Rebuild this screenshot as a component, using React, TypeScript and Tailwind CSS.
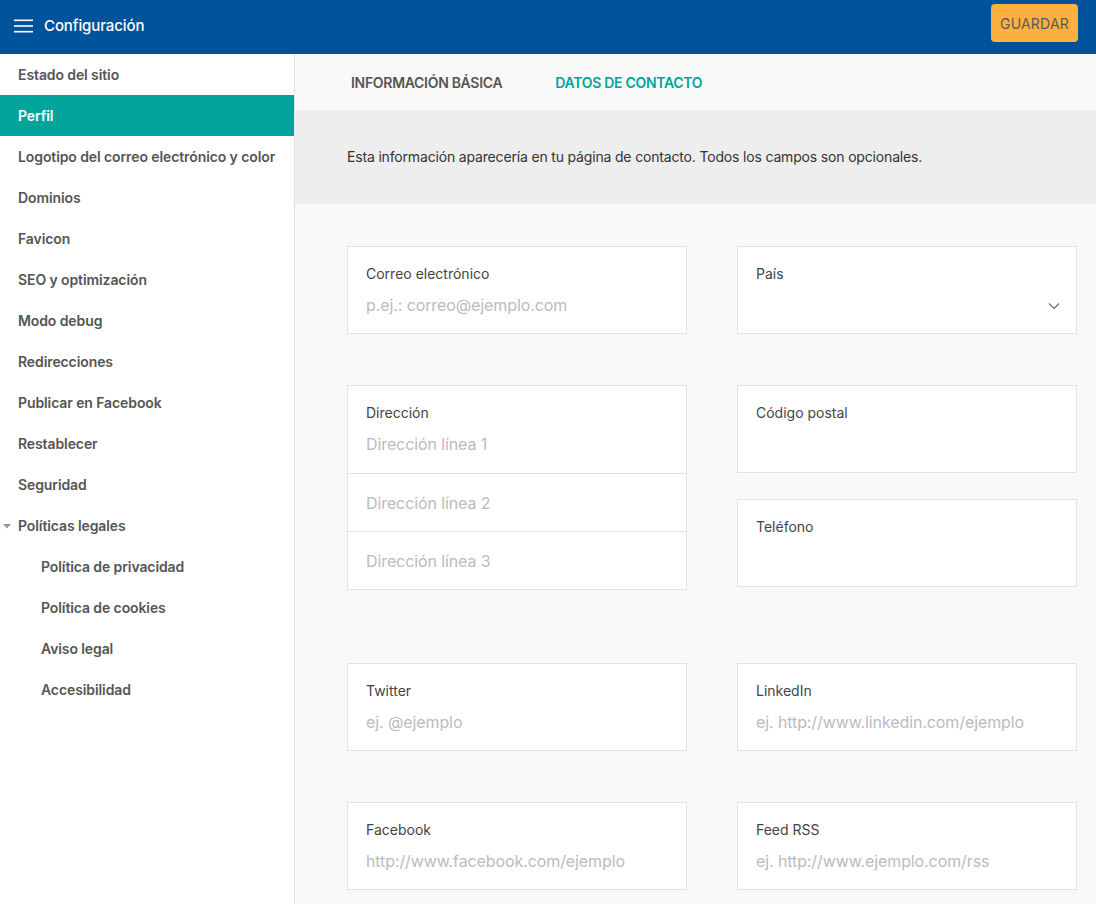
import React from "react";

const navItems: { label: string; active?: boolean; sub?: boolean; caret?: boolean }[] = [
  { label: "Estado del sitio" },
  { label: "Perfil", active: true },
  { label: "Logotipo del correo electrónico y color" },
  { label: "Dominios" },
  { label: "Favicon" },
  { label: "SEO y optimización" },
  { label: "Modo debug" },
  { label: "Redirecciones" },
  { label: "Publicar en Facebook" },
  { label: "Restablecer" },
  { label: "Seguridad" },
  { label: "Políticas legales", caret: true },
  { label: "Política de privacidad", sub: true },
  { label: "Política de cookies", sub: true },
  { label: "Aviso legal", sub: true },
  { label: "Accesibilidad", sub: true },
];

function Card({ label, placeholder, select }: { label: string; placeholder?: string; select?: boolean }) {
  return (
    <div className="w-[340px] h-[88px] bg-white border border-[#e3e3e3] px-[18px] pt-[18px]">
      <div className="text-[14px] leading-[18px] text-[#444]">{label}</div>
      <div className="mt-[12px] h-[20px] flex items-center justify-between text-[16px] leading-[20px] text-[#bbb] tracking-[-0.1px]">
        <span>{placeholder ?? ""}</span>
        {select && (
          <svg width="12" height="8" viewBox="0 0 12 8" className="mr-[-2px] mt-[2px]">
            <path d="M1 1.5 L6 6.5 L11 1.5" fill="none" stroke="#666" strokeWidth="1.1" />
          </svg>
        )}
      </div>
    </div>
  );
}

export default function App() {
  return (
    <div className="w-[1096px] h-[904px] overflow-hidden flex flex-col bg-[#f9f9f9]" style={{ fontFamily: "Inter, 'Noto Sans', sans-serif" }}>
      <header className="h-[54px] shrink-0 bg-[#00529b] flex items-start justify-between pl-[14px] pr-[18px]">
        <div className="flex items-center gap-[11px] h-[52px]">
          <svg width="19" height="14" viewBox="0 0 19 14">
            <rect x="0" y="0.5" width="19" height="1.6" fill="#fff" />
            <rect x="0" y="6.2" width="19" height="1.6" fill="#fff" />
            <rect x="0" y="11.9" width="19" height="1.6" fill="#fff" />
          </svg>
          <span className="text-white text-[15px] font-medium tracking-[-0.1px]">Configuración</span>
        </div>
        <button className="mt-[4px] h-[38px] w-[87px] rounded-[4px] bg-[#fbb040] text-[#5a5a5a] text-[14px] tracking-[0.2px]">GUARDAR</button>
      </header>
      <div className="flex flex-1 min-h-0">
        <aside className="w-[295px] shrink-0 bg-white border-r border-[#e3e3e3]">
          {navItems.map((it) => (
            <div
              key={it.label}
              className={
                "h-[41px] flex items-center pb-[1px] text-[14px] font-semibold tracking-[-0.1px] relative " +
                (it.active ? "bg-[#00a49a] text-white " : "text-[#555] ") +
                (it.sub ? "pl-[41px]" : "pl-[18px]")
              }
            >
              {it.caret && (
                <svg width="8" height="5" viewBox="0 0 8 5" className="absolute left-[3px] top-[19px]">
                  <path d="M0 0 L8 0 L4 4.5 Z" fill="#9a9a9a" />
                </svg>
              )}
              {it.label}
            </div>
          ))}
        </aside>
        <main className="flex-1 flex flex-col">
          <div className="h-[56px] shrink-0 flex items-center pl-[56px] gap-[53px] text-[14px] font-semibold tracking-[-0.3px]">
            <span className="text-[#555]">INFORMACIÓN BÁSICA</span>
            <span className="text-[#00a49a]">DATOS DE CONTACTO</span>
          </div>
          <div className="h-[94px] shrink-0 bg-[#eeeeee] flex items-center pl-[52px] pb-[2px] text-[14px] text-[#333] tracking-[-0.17px]">
            Esta información aparecería en tu página de contacto. Todos los campos son opcionales.
          </div>
          <div className="pl-[52px] pt-[42px] flex gap-[50px]">
            <div className="flex flex-col">
              <Card label="Correo electrónico" placeholder="p.ej.: correo@ejemplo.com" />
              <div className="mt-[51px] w-[340px] bg-white border border-[#e3e3e3]">
                <div className="h-[88px] px-[18px] pt-[18px] border-b border-[#e3e3e3]">
                  <div className="text-[14px] leading-[18px] text-[#444]">Dirección</div>
                  <div className="mt-[12px] text-[16px] leading-[20px] text-[#bbb] tracking-[-0.1px]">Dirección línea 1</div>
                </div>
                <div className="h-[58px] px-[18px] flex items-center border-b border-[#e3e3e3] text-[16px] text-[#bbb] tracking-[-0.1px]">Dirección línea 2</div>
                <div className="h-[57px] px-[18px] flex items-center text-[16px] text-[#bbb] tracking-[-0.1px]">Dirección línea 3</div>
              </div>
              <div className="mt-[73px]">
                <Card label="Twitter" placeholder="ej. @ejemplo" />
              </div>
              <div className="mt-[51px]">
                <Card label="Facebook" placeholder="http://www.facebook.com/ejemplo" />
              </div>
            </div>
            <div className="flex flex-col">
              <Card label="País" select />
              <div className="mt-[51px]">
                <Card label="Código postal" />
              </div>
              <div className="mt-[26px]">
                <Card label="Teléfono" />
              </div>
              <div className="mt-[76px]">
                <Card label="LinkedIn" placeholder="ej. http://www.linkedin.com/ejemplo" />
              </div>
              <div className="mt-[51px]">
                <Card label="Feed RSS" placeholder="ej. http://www.ejemplo.com/rss" />
              </div>
            </div>
          </div>
        </main>
      </div>
    </div>
  );
}
